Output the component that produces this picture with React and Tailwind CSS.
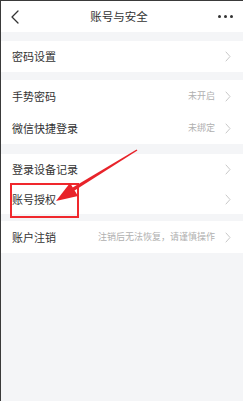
import { Fragment } from 'react'

const groups = [
  [{ label: '密码设置', h: 'h-[31px]' }],
  [
    { label: '手势密码', value: '未开启', h: 'h-[32px]' },
    { label: '微信快捷登录', value: '未绑定', h: 'h-[32px]' },
  ],
  [
    { label: '登录设备记录', h: 'h-[30px]' },
    { label: '账号授权', h: 'h-[30px]' },
  ],
  [{ label: '账户注销', value: '注销后无法恢复，请谨慎操作', h: 'h-[32px]' }],
]

const gaps = ['h-[9px]', 'h-[8px]', 'h-[10px]', 'h-[7px]']

function Chevron() {
  return (
    <svg width="6" height="11" viewBox="0 0 6 11" className="shrink-0">
      <path d="M1 1l4 4.5-4 4.5" fill="none" stroke="#c8c8c8" strokeWidth="1" strokeLinecap="round" strokeLinejoin="round" />
    </svg>
  )
}

function Row({ label, value, h }) {
  return (
    <div className={`flex items-center bg-white pl-[11px] pr-[12px] ${h}`}>
      <span className="flex-1 text-[11px] text-[#333]">{label}</span>
      {value && <span className="mr-[10px] text-[9px] text-[#b0b0b0]">{value}</span>}
      <Chevron />
    </div>
  )
}

export default function App() {
  return (
    <div
      className="relative h-[401px] w-[243px] overflow-hidden border-l border-t border-[#3a3a3a] bg-[#f4f5f7]"
      style={{ fontFamily: '"Noto Sans CJK SC", "Noto Sans", sans-serif' }}
    >
      {/* header */}
      <div className="flex h-[31px] items-center justify-between bg-white px-[9px]">
        <svg width="10" height="14" viewBox="0 0 10 14">
          <path d="M8 1L2 7l6 6" fill="none" stroke="#333" strokeWidth="1.3" strokeLinecap="round" strokeLinejoin="round" />
        </svg>
        <span className="text-[11.5px] text-[#333]">账号与安全</span>
        <div className="flex gap-[3px] pr-[1px]">
          <span className="h-[3px] w-[3px] rounded-full bg-[#333]" />
          <span className="h-[3px] w-[3px] rounded-full bg-[#333]" />
          <span className="h-[3px] w-[3px] rounded-full bg-[#333]" />
        </div>
      </div>

      {groups.map((rows, i) => (
        <Fragment key={i}>
          <div className={gaps[i]} />
          {rows.map((r) => (
            <Row key={r.label} {...r} />
          ))}
        </Fragment>
      ))}

      {/* annotation: red box + arrow */}
      <div className="absolute left-[9px] top-[182px] h-[35px] w-[69px] border-2 border-[#f0282d]" />
      <svg className="absolute left-0 top-0" width="243" height="401" viewBox="0 0 243 401">
        <path d="M135.6 148.4 L136.4 149.6 L72 190.5 L70 187.5 Z" fill="#e8232a" />
        <path d="M55 200 L69 182 L77 195 Z" fill="#e8232a" />
      </svg>
    </div>
  )
}
